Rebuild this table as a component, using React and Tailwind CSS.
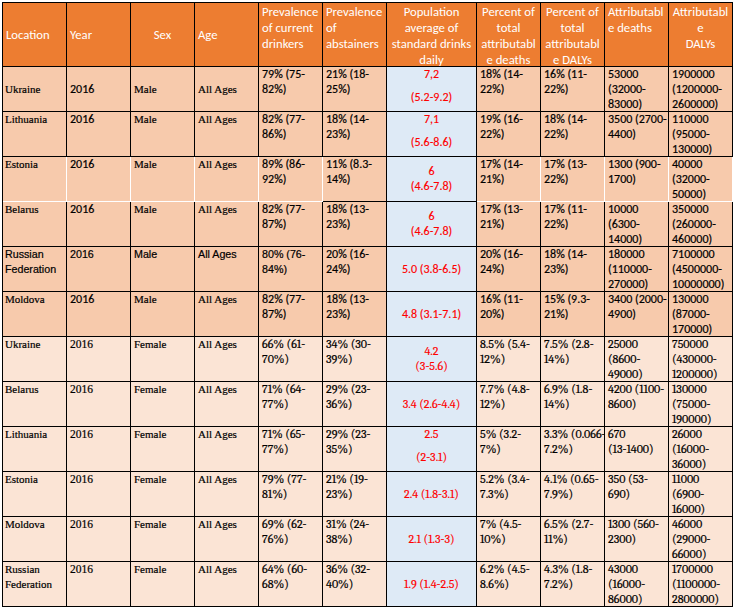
import React from "react";

const CAL = "font-['Carlito','Liberation_Sans',sans-serif] text-[12px]";
const CALRED = "font-['Carlito','Liberation_Sans',sans-serif] text-[12px] text-[#FF0000]";
const TNR = "font-['Liberation_Serif',serif] text-[11px]";
const TNRY = "font-['Liberation_Serif',serif] text-[11.5px]";
const CAM = "font-['Caladea','Liberation_Serif',serif] text-[12px]";
const CAMRED = "font-['Caladea','Liberation_Serif',serif] text-[12px] text-[#FF0000]";
const ARI = "font-['Liberation_Sans',sans-serif] text-[10.7px]";

const rows = [
  { s: "M", loc: ["Ukraine"], mid: true, c: [["79% (75-", "82%)"], ["21% (18-", "25%)"]], pop: ["7,2", "(5.2-9.2)"], gap: true, r: [["18% (14-", "22%)"], ["16% (11-", "22%)"], ["53000", "(32000-", "83000)"], ["1900000", "(1200000-", "2600000)"]] },
  { s: "M", loc: ["Lithuania"], c: [["82% (77-", "86%)"], ["18% (14-", "23%)"]], pop: ["7,1", "(5.6-8.6)"], gap: true, r: [["19% (16-", "22%)"], ["18% (14-", "22%)"], ["3500 (2700-", "4400)"], ["110000", "(95000-", "130000)"]] },
  { s: "M", loc: ["Estonia"], white: true, c: [["89% (86-", "92%)"], ["11% (8.3-", "14%)"]], pop: ["6", "(4.6-7.8)"], r: [["17% (14-", "21%)"], ["17% (13-", "22%)"], ["1300 (900-", "1700)"], ["40000", "(32000-", "50000)"]] },
  { s: "M", loc: ["Belarus"], c: [["82% (77-", "87%)"], ["18% (13-", "23%)"]], pop: ["6", "(4.6-7.8)"], r: [["17% (13-", "21%)"], ["17% (11-", "22%)"], ["10000", "(6300-", "14000)"], ["350000", "(260000-", "460000)"]] },
  { s: "M", loc: ["Russian", "Federation"], arial: true, c: [["80% (76-", "84%)"], ["20% (16-", "24%)"]], pop: ["5.0 (3.8-6.5)"], r: [["20% (16-", "24%)"], ["18% (14-", "23%)"], ["180000", "(110000-", "270000)"], ["7100000", "(4500000-", "10000000)"]] },
  { s: "M", loc: ["Moldova"], c: [["82% (77-", "87%)"], ["18% (13-", "23%)"]], pop: ["4.8 (3.1-7.1)"], r: [["16% (11-", "20%)"], ["15% (9.3-", "21%)"], ["3400 (2000-", "4900)"], ["130000", "(87000-", "170000)"]] },
  { s: "F", loc: ["Ukraine"], c: [["66% (61-", "70%)"], ["34% (30-", "39%)"]], pop: ["4.2", "(3-5.6)"], r: [["8.5% (5.4-", "12%)"], ["7.5% (2.8-", "14%)"], ["25000", "(8600-", "49000)"], ["750000", "(430000-", "1200000)"]] },
  { s: "F", loc: ["Belarus"], c: [["71% (64-", "77%)"], ["29% (23-", "36%)"]], pop: ["3.4 (2.6-4.4)"], r: [["7.7% (4.8-", "12%)"], ["6.9% (1.8-", "14%)"], ["4200 (1100-", "8600)"], ["130000", "(75000-", "190000)"]] },
  { s: "F", loc: ["Lithuania"], c: [["71% (65-", "77%)"], ["29% (23-", "35%)"]], pop: ["2.5", "(2-3.1)"], gap: true, r: [["5% (3.2-", "7%)"], ["3.3% (0.066-", "7.2%)"], ["670", "(13-1400)"], ["26000", "(16000-", "36000)"]] },
  { s: "F", loc: ["Estonia"], c: [["79% (77-", "81%)"], ["21% (19-", "23%)"]], pop: ["2.4 (1.8-3.1)"], r: [["5.2% (3.4-", "7.3%)"], ["4.1% (0.65-", "7.9%)"], ["350 (53-", "690)"], ["11000", "(6900-", "16000)"]] },
  { s: "F", loc: ["Moldova"], c: [["69% (62-", "76%)"], ["31% (24-", "38%)"]], pop: ["2.1 (1.3-3)"], r: [["7% (4.5-", "10%)"], ["6.5% (2.7-", "11%)"], ["1300 (560-", "2300)"], ["46000", "(29000-", "66000)"]] },
  { s: "F", loc: ["Russian", "Federation"], c: [["64% (60-", "68%)"], ["36% (32-", "40%)"]], pop: ["1.9 (1.4-2.5)"], r: [["6.2% (4.5-", "8.6%)"], ["4.3% (1.8-", "7.2%)"], ["43000", "(16000-", "86000)"], ["1700000", "(1100000-", "2800000)"]] },
];

function Lines({ lines }) {
  return lines.map((l, i) => (
    <div key={i} className="whitespace-nowrap leading-[15px]">
      {l}
    </div>
  ));
}

function HeadCell({ lines, align = "left", middle = false }) {
  const a = align === "center" ? "text-center" : "text-left";
  const v = middle ? "flex flex-col justify-center" : "pt-px";
  return (
    <div className={`bg-[#ED7D31] border-r border-b border-black px-[3px] text-white font-['Carlito','Liberation_Sans',sans-serif] text-[12.7px] leading-[16px] overflow-hidden ${a} ${v}`}>
      {lines.map((l, i) => (
        <div key={i} className="whitespace-nowrap">
          {l}
        </div>
      ))}
    </div>
  );
}

function Row({ row }) {
  const male = row.s === "M";
  const bg = male ? "bg-[#F7CAAC]" : "bg-[#FBE4D5]";
  const bc = row.white ? "border-white" : "border-black";
  const base = `${bg} border-r border-b overflow-hidden pl-[3px] text-black [-webkit-text-stroke:0.2px_currentColor]`;
  const cell = `${base} ${bc}`;
  const locFont = row.arial ? ARI : TNR;
  const yearFont = row.arial ? ARI : male ? CAL : TNRY;
  const sexFont = row.arial ? ARI : TNR;
  const p1Font = row.arial ? ARI : male ? CAL : CAM;
  const numFont = male ? CAL : CAM;
  const mid = row.mid ? "flex flex-col justify-center" : "";
  const popFont = male ? CALRED : CAMRED;
  const popLayout = row.gap
    ? "flex flex-col items-center justify-start gap-[8px]"
    : "flex flex-col items-center justify-center";
  const extraColors = row.arial
    ? ["", "text-[#3d1c3d]", "text-[#3d1c3d]", "text-[#1f2a44]"]
    : ["", "", "", ""];
  return (
    <>
      <div className={`${bg} border-r border-b ${bc} overflow-hidden pl-[2px] text-black [-webkit-text-stroke:0.2px_currentColor] ${locFont} ${mid}`}>
        <Lines lines={row.loc} />
      </div>
      <div className={`${cell} ${yearFont} ${mid}`}>
        <Lines lines={["2016"]} />
      </div>
      <div className={`${cell} ${sexFont} ${mid}`}>
        <Lines lines={[male ? "Male" : "Female"]} />
      </div>
      <div className={`${cell} ${sexFont} ${mid}`}>
        <Lines lines={["All Ages"]} />
      </div>
      <div className={`${cell} ${p1Font}`}>
        <Lines lines={row.c[0]} />
      </div>
      <div className={`${base} border-black ${numFont}`}>
        <Lines lines={row.c[1]} />
      </div>
      <div className={`bg-[#DEEAF6] border-r border-b border-black [-webkit-text-stroke:0.15px_currentColor] ${popFont} ${popLayout}`}>
        {row.pop.map((l, i) => (
          <div key={i} className="whitespace-nowrap leading-[15px]">
            {l}
          </div>
        ))}
      </div>
      <div className={`${cell} ${numFont} ${extraColors[0]}`}>
        <Lines lines={row.r[0]} />
      </div>
      <div className={`${cell} ${numFont} ${extraColors[1]}`}>
        <Lines lines={row.r[1]} />
      </div>
      <div className={`${cell} ${numFont} ${extraColors[2]}`}>
        <Lines lines={row.r[2]} />
      </div>
      <div className={`${cell} ${numFont} ${extraColors[3]}`}>
        <Lines lines={row.r[3]} />
      </div>
    </>
  );
}

export default function App() {
  return (
    <div className="w-[735px] h-[609px] bg-white pt-[2px] pl-[2px]">
      <div className="grid grid-cols-[64px_64px_64px_64px_64px_64px_90px_64px_64px_64px_64px] grid-rows-[64px_repeat(12,45px)] w-[731px] border-l border-t border-black">
        <HeadCell lines={["Location"]} middle />
        <HeadCell lines={["Year"]} middle />
        <HeadCell lines={["Sex"]} middle align="center" />
        <HeadCell lines={["Age"]} middle />
        <HeadCell lines={["Prevalence", "of current", "drinkers"]} />
        <HeadCell lines={["Prevalence", "of", "abstainers"]} />
        <HeadCell lines={["Population", "average of", "standard drinks", "daily"]} align="center" />
        <HeadCell lines={["Percent of", "total", "attributabl", "e deaths"]} align="center" />
        <HeadCell lines={["Percent of", "total", "attributabl", "e DALYs"]} align="center" />
        <HeadCell lines={["Attributabl", "e deaths"]} />
        <HeadCell lines={["Attributabl", "e", "DALYs"]} align="center" />
        {rows.map((row, i) => (
          <Row key={i} row={row} />
        ))}
      </div>
    </div>
  );
}
